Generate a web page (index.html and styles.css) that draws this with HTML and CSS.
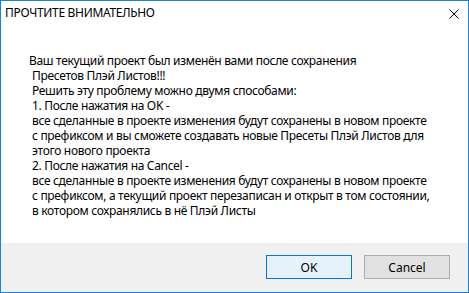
FILE: index.html
```html
<!DOCTYPE html>
<html>
<head>
<meta charset="utf-8">
<link rel="stylesheet" href="styles.css">
</head>
<body>
<div class="window">
  <div class="titlebar">
    <span class="title">ПРОЧТИТЕ ВНИМАТЕЛЬНО</span>
    <svg class="close" width="10" height="10" viewBox="0 0 10 10"><path d="M0.5 0.5L9.5 9.5M9.5 0.5L0.5 9.5" stroke="#000" stroke-width="1" fill="none"/></svg>
  </div>
  <div class="content">
    <div class="line first">Ваш текущий проект был изменён вами после сохранения</div>
    <div class="line">Пресетов Плэй Листов!!!</div>
    <div class="line">Решить эту проблему можно двумя способами:</div>
    <div class="line">1. После нажатия на OK -</div>
    <div class="line">все сделанные в проекте изменения будут сохранены в новом проекте</div>
    <div class="line">с префиксом и вы сможете создавать новые Пресеты Плэй Листов для</div>
    <div class="line">этого нового проекта</div>
    <div class="line">2. После нажатия на Cancel -</div>
    <div class="line">все сделанные в проекте изменения будут сохранены в новом проекте</div>
    <div class="line">с префиксом, а текущий проект перезаписан и открыт в том состоянии,</div>
    <div class="line">в котором сохранялись в нё Плэй Листы</div>
  </div>
  <div class="footer">
    <button class="btn btn-default">OK</button>
    <button class="btn">Cancel</button>
  </div>
</div>
</body>
</html>
```
FILE: styles.css
```css
html, body {
  margin: 0;
  padding: 0;
  background: #ffffff;
}
body {
  font-family: "Noto Sans", "Open Sans", sans-serif;
  font-size: 12px;
  letter-spacing: -0.32px;
  color: #000;
}
.window {
  width: 469px;
  height: 293px;
  box-sizing: border-box;
  border: 1px solid #1883d7;
  display: flex;
  flex-direction: column;
  background: #fff;
}
.titlebar {
  height: 29px;
  display: flex;
  align-items: flex-start;
  justify-content: space-between;
  padding: 4px 9px 0 4px;
  box-sizing: border-box;
}
.title {
  line-height: 16px;
}
.close {
  margin-top: 4px;
}
.content {
  flex: 1;
  padding: 23px 0 0 28px;
  line-height: 15px;
}
.line {
  white-space: pre;
  padding-left: 3px;
}
.line.first {
  padding-left: 0;
}
.footer {
  height: 49px;
  background: #f0f0f0;
  display: flex;
  justify-content: flex-end;
  align-items: flex-start;
  gap: 12px;
  padding: 12px 18px 0 0;
  box-sizing: border-box;
}
.btn {
  width: 86px;
  height: 24px;
  margin: 0;
  padding: 0;
  font-family: inherit;
  font-size: 12px;
  letter-spacing: 0;
  color: #000;
  background: #e1e1e1;
  border: 1px solid #adadad;
  border-radius: 0;
}
.btn-default {
  background: #e5f1fb;
  border-color: #0078d7;
}
```
